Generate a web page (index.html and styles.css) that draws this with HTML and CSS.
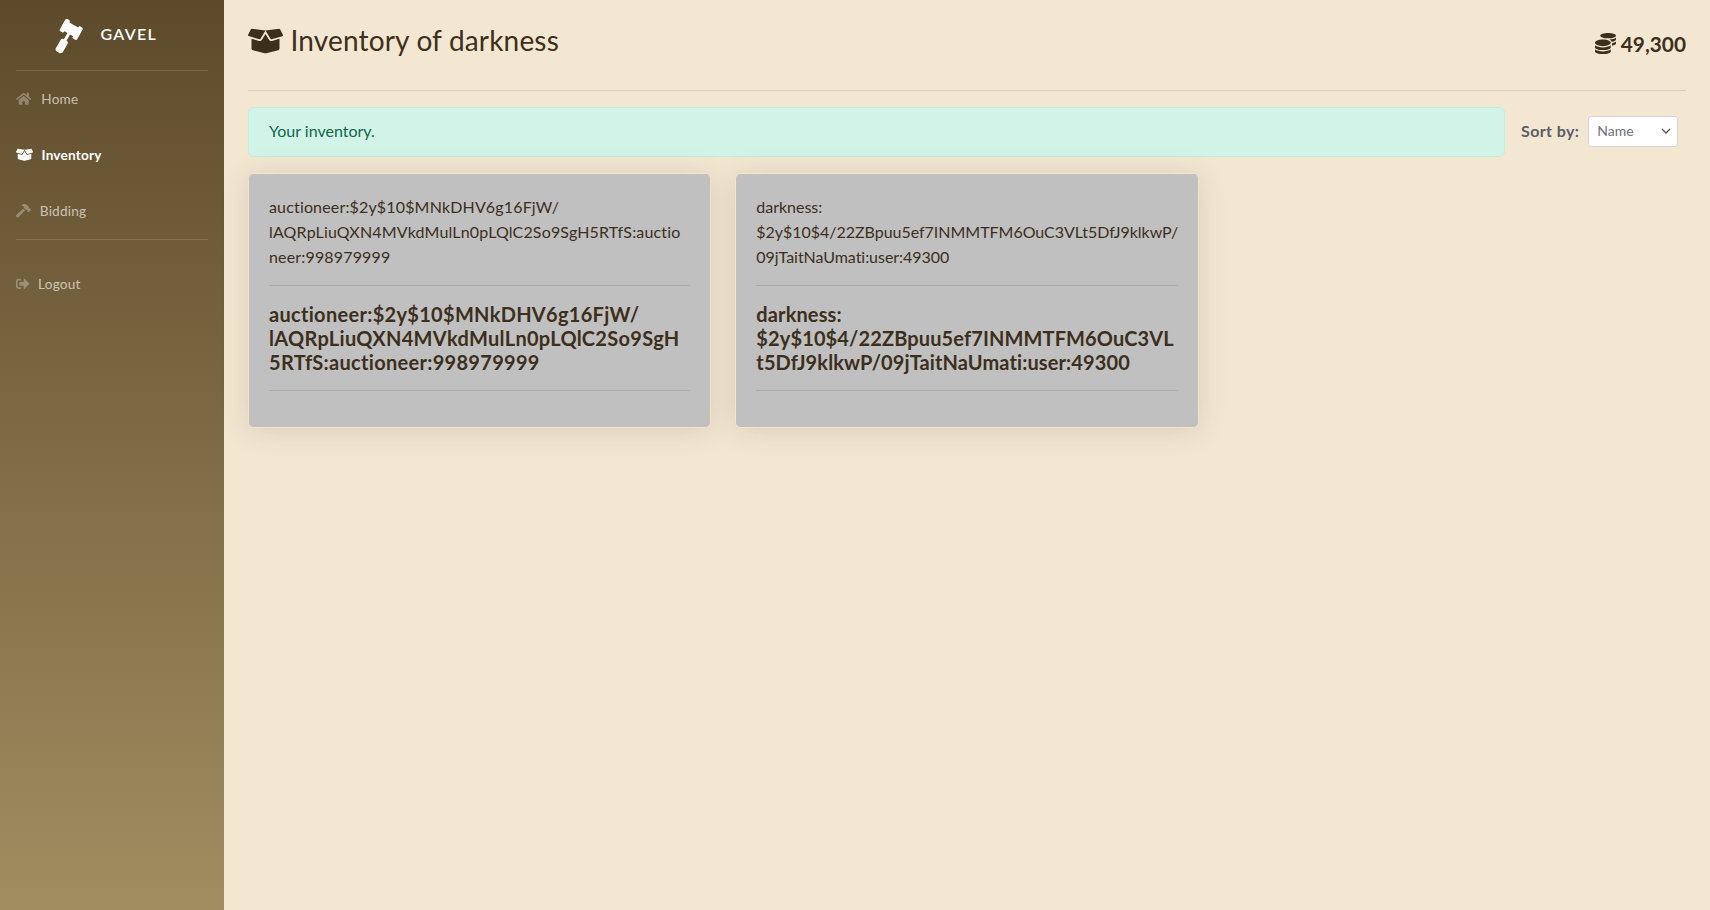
FILE: index.html
```html
<!DOCTYPE html>
<html lang="en">
<head>
<meta charset="utf-8">
<title>Inventory of darkness</title>
<link rel="stylesheet" href="styles.css">
</head>
<body>
<div class="app">
  <nav class="sidebar">
    <a class="brand" href="#">
      <svg class="brand-icon" viewBox="0 0 512 512"><path d="M504.971 199.362l-22.627-22.627c-9.373-9.373-24.569-9.373-33.941 0l-5.657 5.657L329.608 69.255l5.657-5.657c9.373-9.373 9.373-24.569 0-33.941L312.638 7.029c-9.373-9.373-24.569-9.373-33.941 0L154.246 131.48c-9.373 9.373-9.373 24.569 0 33.941l22.627 22.627c9.373 9.373 24.569 9.373 33.941 0l5.657-5.657 39.598 39.598-81.04 81.04-5.657-5.657c-12.497-12.497-32.758-12.497-45.255 0L9.373 412.118c-12.497 12.497-12.497 32.758 0 45.255l45.255 45.255c12.497 12.497 32.758 12.497 45.255 0l114.745-114.745c12.497-12.497 12.497-32.758 0-45.255l-5.657-5.657 81.04-81.04 39.598 39.598-5.657 5.657c-9.373 9.373-9.373 24.569 0 33.941l22.627 22.627c9.373 9.373 24.569 9.373 33.941 0l124.451-124.451c9.372-9.372 9.372-24.568 0-33.941z"/></svg>
      <span class="brand-text">GAVEL</span>
    </a>
    <hr class="side-rule">
    <a class="nav-link" href="#">
      <svg class="nav-icon home" viewBox="0 0 576 512"><path d="M280.37 148.26L96 300.11V464a16 16 0 0 0 16 16l112.06-.29a16 16 0 0 0 15.92-16V368a16 16 0 0 1 16-16h64a16 16 0 0 1 16 16v95.64a16 16 0 0 0 16 16.05L464 480a16 16 0 0 0 16-16V300L295.67 148.26a12.19 12.19 0 0 0-15.3 0zM571.6 251.47L488 182.56V44.05a12 12 0 0 0-12-12h-56a12 12 0 0 0-12 12v72.61L318.47 43a48 48 0 0 0-61 0L4.34 251.47a12 12 0 0 0-1.6 16.9l25.5 31A12 12 0 0 0 45.15 301l235.22-193.74a12.19 12.19 0 0 1 15.3 0L530.9 301a12 12 0 0 0 16.9-1.6l25.5-31a12 12 0 0 0-1.7-16.93z"/></svg>
      <span>Home</span>
    </a>
    <a class="nav-link active" href="#">
      <svg class="nav-icon wide" viewBox="0 0 640 512"><path d="M425.7 256c-16.9 0-32.8-9-41.4-23.4L320 126l-64.2 106.6c-8.7 14.5-24.6 23.5-41.5 23.5-4.5 0-9-.6-13.3-1.9L64 215v178c0 14.7 10 27.5 24.2 31l216.2 54.1c10.2 2.5 20.9 2.5 31 0L551.8 424c14.2-3.6 24.2-16.4 24.2-31V215l-137 39.1c-4.3 1.3-8.8 1.9-13.3 1.9zm212.6-112.2L586.8 41c-3.1-6.2-9.8-9.8-16.7-8.9L320 64l91.7 152.1c3.8 6.3 11.4 9.3 18.5 7.3l197.9-56.5c9.9-2.9 14.7-13.9 10.2-23.1zM53.2 41L1.7 143.8c-4.6 9.2.3 20.2 10.1 23l197.9 56.5c7.1 2 14.7-1 18.5-7.3L320 64 69.8 32.1c-6.9-.8-13.5 2.7-16.6 8.9z"/></svg>
      <span>Inventory</span>
    </a>
    <a class="nav-link" href="#">
      <svg class="nav-icon" viewBox="0 0 576 512"><path d="M571.31 193.94l-22.63-22.63c-6.25-6.25-16.38-6.25-22.63 0l-11.31 11.31-28.9-28.9c5.63-21.31.36-44.9-16.35-61.61l-45.25-45.25c-62.48-62.48-163.79-62.48-226.28 0l90.51 45.25v18.75c0 16.97 6.74 33.25 18.75 45.25l49.14 49.14c16.71 16.71 40.3 21.98 61.61 16.35l28.9 28.9-11.31 11.31c-6.25 6.25-6.25 16.38 0 22.63l22.63 22.63c6.25 6.25 16.38 6.25 22.63 0l90.51-90.51c6.23-6.24 6.23-16.37-.02-22.62zm-286.72-15.2c-3.7-3.7-6.84-7.79-9.85-11.95L19.64 404.96c-25.57 23.88-26.26 64.19-1.53 88.93s65.05 24.05 88.93-1.53l238.13-255.07c-3.96-2.91-7.9-5.87-11.44-9.41l-49.14-49.14z"/></svg>
      <span>Bidding</span>
    </a>
    <hr class="side-rule second">
    <a class="nav-link" href="#">
      <svg class="nav-icon narrow" viewBox="0 0 512 512"><path d="M497 273L329 441c-15 15-41 4.5-41-17v-96H152c-13.3 0-24-10.7-24-24v-96c0-13.3 10.7-24 24-24h136V88c0-21.4 25.9-32 41-17l168 168c9.3 9.4 9.3 24.6 0 34zM192 436v-40c0-6.6-5.4-12-12-12H96c-17.7 0-32-14.3-32-32V160c0-17.7 14.3-32 32-32h84c6.6 0 12-5.4 12-12V76c0-6.6-5.4-12-12-12H96c-53 0-96 43-96 96v192c0 53 43 96 96 96h84c6.6 0 12-5.4 12-12z"/></svg>
      <span>Logout</span>
    </a>
  </nav>
  <main class="content">
    <header class="page-head">
      <h1 class="title">
        <svg class="title-icon" viewBox="0 0 640 512"><path d="M425.7 256c-16.9 0-32.8-9-41.4-23.4L320 126l-64.2 106.6c-8.7 14.5-24.6 23.5-41.5 23.5-4.5 0-9-.6-13.3-1.9L64 215v178c0 14.7 10 27.5 24.2 31l216.2 54.1c10.2 2.5 20.9 2.5 31 0L551.8 424c14.2-3.6 24.2-16.4 24.2-31V215l-137 39.1c-4.3 1.3-8.8 1.9-13.3 1.9zm212.6-112.2L586.8 41c-3.1-6.2-9.8-9.8-16.7-8.9L320 64l91.7 152.1c3.8 6.3 11.4 9.3 18.5 7.3l197.9-56.5c9.9-2.9 14.7-13.9 10.2-23.1zM53.2 41L1.7 143.8c-4.6 9.2.3 20.2 10.1 23l197.9 56.5c7.1 2 14.7-1 18.5-7.3L320 64 69.8 32.1c-6.9-.8-13.5 2.7-16.6 8.9z"/></svg>
        <span>Inventory of darkness</span>
      </h1>
      <div class="balance">
        <svg class="coins" viewBox="0 0 512 512"><path d="M0 405.3V448c0 35.3 86 64 192 64s192-28.7 192-64v-42.7C342.7 434.4 267.2 448 192 448S41.3 434.4 0 405.3zM320 128c106 0 192-28.7 192-64S426 0 320 0 128 28.7 128 64s86 64 192 64zM0 300.4V352c0 35.3 86 64 192 64s192-28.7 192-64v-51.6c-41.3 34-116.9 51.6-192 51.6S41.3 334.4 0 300.4zm416 11c57.3-11.1 96-31.7 96-55.4v-42.7c-23.2 16.4-57.3 27.6-96 34.5v63.6zM192 160C86 160 0 195.8 0 240s86 80 192 80 192-35.8 192-80-86-80-192-80zm219.3 56.3c60-10.8 100.7-32 100.7-56.3v-42.7c-35.5 25.1-96.5 38.6-160.7 41.8 29.5 14.3 51.2 33.5 60 57.2z"/></svg>
        <span>49,300</span>
      </div>
    </header>
    <hr class="head-rule">
    <section class="toolbar">
      <div class="alert">Your inventory.</div>
      <label class="sort">
        <span class="sort-label">Sort by:</span>
        <select class="sort-select"><option>Name</option></select>
      </label>
    </section>
    <section class="cards">
      <article class="card">
        <p class="card-text">auctioneer:$2y$10$MNkDHV6g16FjW/<br>lAQRpLiuQXN4MVkdMulLn0pLQlC2So9SgH5RTfS:auctio<br>neer:998979999</p>
        <hr class="card-rule">
        <h5 class="card-title">auctioneer:$2y$10$MNkDHV6g16FjW/<br>lAQRpLiuQXN4MVkdMulLn0pLQlC2So9SgH<br>5RTfS:auctioneer:998979999</h5>
        <hr class="card-rule">
      </article>
      <article class="card tight">
        <p class="card-text">darkness:<br>$2y$10$4/22ZBpuu5ef7INMMTFM6OuC3VLt5DfJ9klkwP/<br>09jTaitNaUmati:user:49300</p>
        <hr class="card-rule">
        <h5 class="card-title">darkness:<br>$2y$10$4/22ZBpuu5ef7INMMTFM6OuC3VL<br>t5DfJ9klkwP/09jTaitNaUmati:user:49300</h5>
        <hr class="card-rule">
      </article>
    </section>
  </main>
</div>
</body>
</html>
```
FILE: styles.css
```css
* { box-sizing: border-box; }
html, body { height: 100%; }
body {
  margin: 0;
  font-family: Lato, "Noto Sans", sans-serif;
  font-size: 16px;
  color: #3c2f1c;
  background: #f4e7d1;
  overflow: hidden;
}
a { text-decoration: none; }
.app { display: flex; height: 100%; }
.sidebar {
  width: 224px;
  flex: none;
  padding: 0 16px;
  display: flex;
  flex-direction: column;
  background: linear-gradient(180deg, #5d4a2a 0%, #a18d60 100%);
}
.brand {
  height: 70px;
  display: flex;
  align-items: center;
  gap: 16.5px;
  padding-left: 36px;
  color: #fff;
  font-size: 16px;
  letter-spacing: 1.3px;
}
.brand-icon { width: 32px; height: 32px; fill: #fff; transform: rotate(-15deg); }
.brand-text { font-weight: 600; margin-bottom: 4px; }
.side-rule { width: 100%; height: 1px; border: 0; margin: 0; background: rgba(255,255,255,.15); }
.side-rule.second { margin-bottom: 16px; }
.nav-link {
  height: 56px;
  display: flex;
  align-items: center;
  gap: 8.5px;
  font-size: 13.6px;
  letter-spacing: .2px;
  color: rgba(255,255,255,.65);
}
.nav-link svg { fill: rgba(255,255,255,.3); }
.nav-link.active { color: #fff; font-weight: 700; }
.nav-link.active svg { fill: #fff; }
.nav-icon { width: 15.3px; height: 13.6px; flex: none; }
.nav-icon.home { margin-right: 1.5px; }
.nav-icon.wide { width: 17px; }
.nav-icon.narrow { width: 13.6px; }
.content { flex: 1; min-width: 0; padding: 24px 24px 0; }
.page-head { display: flex; justify-content: space-between; align-items: flex-start; height: 50px; }
.title {
  margin: 0;
  display: flex;
  align-items: center;
  gap: 7.5px;
  font-size: 28px;
  font-weight: 400;
  line-height: 33.6px;
  letter-spacing: .17px;
}
.title-icon { width: 35px; height: 28px; fill: #3c2f1c; }
.balance {
  display: flex;
  align-items: center;
  gap: 5px;
  margin-top: 7px;
  font-size: 20.8px;
  font-weight: 700;
  line-height: 25px;
}
.coins { width: 21px; height: 21px; fill: #3c2f1c; }
.head-rule { margin: 16px 0; height: 1px; border: 0; background: rgba(0,0,0,.1); }
.toolbar { display: flex; align-items: center; }
.alert {
  width: 1257px;
  height: 50px;
  padding: 11px 20px;
  line-height: 24px;
  color: #0f6848;
  background: #d2f4e8;
  border: 1px solid #bff0de;
  border-radius: 5.6px;
}
.sort {
  display: flex;
  align-items: center;
  gap: 9px;
  margin-left: 16px;
  margin-bottom: 1.5px;
  font-weight: 700;
  color: #5a5c69;
}
.sort-label { letter-spacing: .4px; margin-bottom: 2px; }
.sort-select {
  width: 90px;
  height: 31px;
  padding: 0 24px 2px 8px;
  appearance: none;
  font: 400 14px Lato, sans-serif;
  color: #6e707e;
  background: #fff url("data:image/svg+xml,%3csvg xmlns='http://www.w3.org/2000/svg' width='10' height='6' viewBox='0 0 10 6'%3e%3cpath fill='none' stroke='%23555' stroke-width='1.3' d='M1 1l4 4 4-4'/%3e%3c/svg%3e") no-repeat right 6px center;
  border: 1px solid #d1d3e2;
  border-radius: 3.2px;
}
.cards { display: flex; gap: 24px; margin-top: 16px; }
.card {
  width: 463.33px;
  padding: 20px;
  background: #c0c0c0;
  border: 1px solid #f0e6c8;
  border-radius: 5.6px;
  box-shadow: 0 2.4px 28px rgba(58,59,69,.15);
}
.card-text { margin: 0; line-height: 25px; letter-spacing: .16px; white-space: nowrap; }
.card-title { margin: 0; font-size: 20px; font-weight: 700; line-height: 24px; letter-spacing: .3px; white-space: nowrap; }
.tight .card-text { letter-spacing: -.03px; }
.tight .card-title { letter-spacing: .12px; }
.card-rule { margin: 16px 0; height: 1px; border: 0; background: rgba(0,0,0,.1); }
```
